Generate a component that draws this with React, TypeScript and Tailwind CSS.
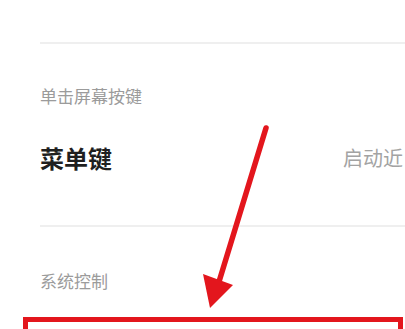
const cjk = { fontFamily: '"Noto Sans CJK SC", "Noto Sans", sans-serif' };

function Arrow() {
  return (
    <svg className="pointer-events-none absolute inset-0" width="405" height="329" viewBox="0 0 405 329">
      <line x1="266" y1="128" x2="218" y2="285" stroke="#e3161d" strokeWidth="5.5" strokeLinecap="round" />
      <polygon points="210,308 203,274 233,285" fill="#e3161d" />
    </svg>
  );
}

export default function App() {
  return (
    <div className="relative h-[329px] w-[405px] overflow-hidden bg-white" style={cjk}>
      <div className="pl-[40px] pt-[42px]">
        <div className="h-[2px] bg-[#efefef]" />
        <p className="mt-[43px] text-[17px] leading-none text-[#9b9b9b]">单击屏幕按键</p>
        <div className="mt-[42px] flex items-center justify-between">
          <span className="text-[24px] font-bold leading-none text-[#1f1f1f]">菜单键</span>
          <span className="pr-[2px] text-[20px] leading-none text-[#a3a3a3]">启动近</span>
        </div>
        <div className="mt-[55px] h-[2px] bg-[#efefef]" />
        <p className="mt-[45px] text-[17px] leading-none text-[#9b9b9b]">系统控制</p>
      </div>
      <div className="absolute left-[23px] top-[317px] h-[40px] w-[380px] border-[5px] border-[#e3161d]" />
      <Arrow />
    </div>
  );
}
